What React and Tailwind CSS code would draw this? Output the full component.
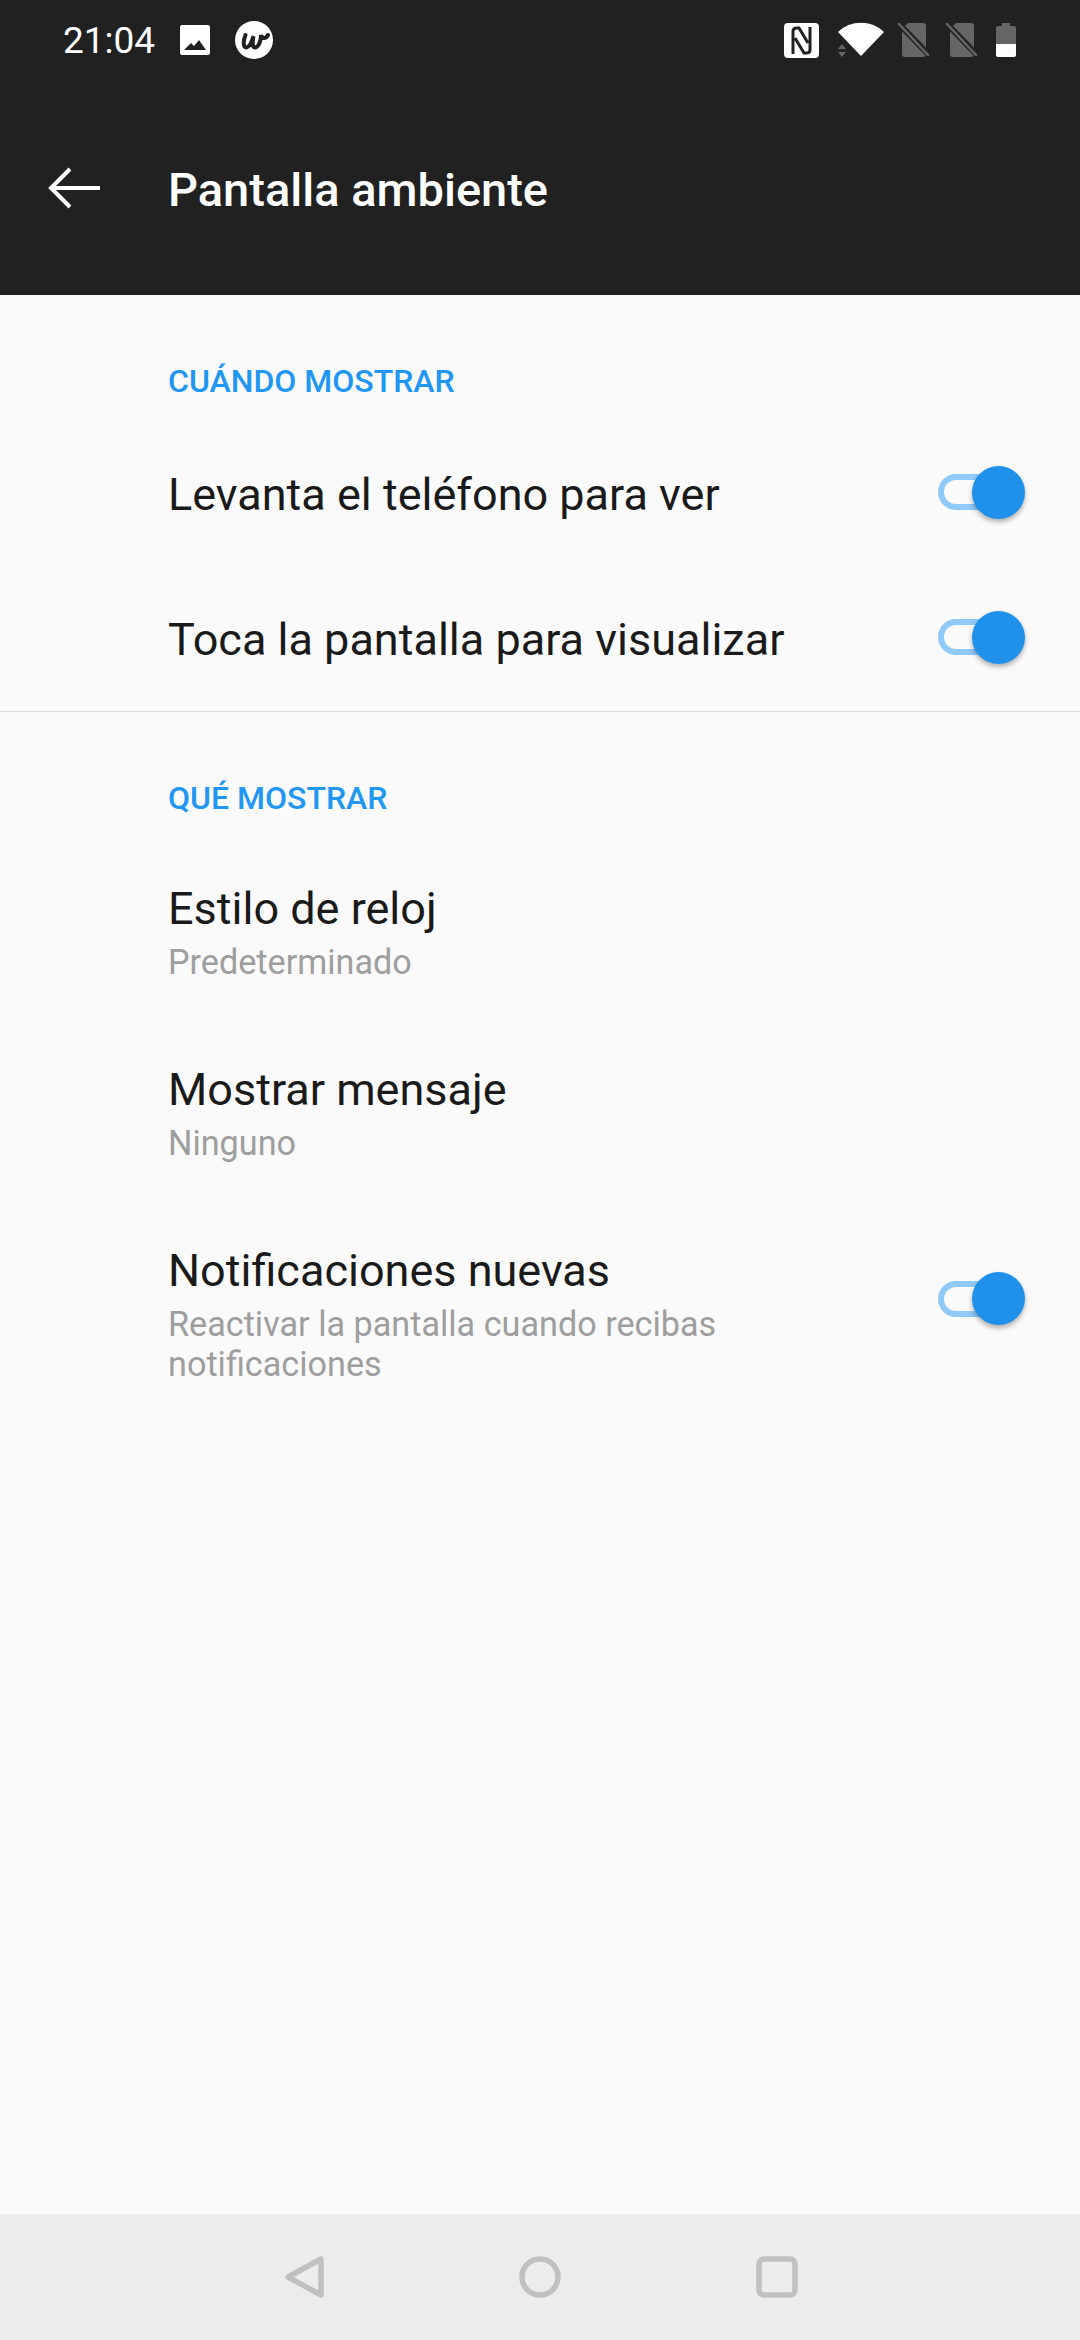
import React from "react";

const Toggle = ({ className }) => (
  <div className={`relative w-[87px] h-[53px] shrink-0 flex items-center ${className}`}>
    <div className="w-[64px] h-[36px] rounded-full border-[6px] border-[#90caf9]"></div>
    <div className="absolute right-0 top-0 w-[53px] h-[53px] rounded-full bg-[#2091eb] shadow-[0_3px_5px_rgba(0,0,0,0.3)]"></div>
  </div>
);

const SimOff = () => (
  <svg width="32" height="34" viewBox="0 0 32 34">
    <path d="M10 0h15a3 3 0 0 1 3 3v28a3 3 0 0 1-3 3H7a3 3 0 0 1-3-3V6z" fill="#666666" />
    <path d="M0 0l31 32" stroke="#212121" strokeWidth="6" />
    <path d="M1 1l29 31" stroke="#666666" strokeWidth="2.5" strokeLinecap="round" />
  </svg>
);

const StatusBar = () => (
  <div className="h-[80px] flex items-center justify-between pl-[63px] pr-[64px]">
    <div className="flex items-center">
      <span className="text-[37px] text-white leading-none">21:04</span>
      <svg className="ml-[25px]" width="30" height="30" viewBox="0 0 30 30">
        <path fillRule="evenodd" d="M2 0h26a2 2 0 0 1 2 2v26a2 2 0 0 1-2 2H2a2 2 0 0 1-2-2V2a2 2 0 0 1 2-2zM4 25h22l-7-10-5 6-3-3z" fill="#ffffff" />
      </svg>
      <svg className="ml-[25px]" width="38" height="38" viewBox="0 0 38 38">
        <circle cx="19" cy="19" r="19" fill="#ffffff" />
        <path d="M10.500 14C8 20 8 27 11.500 26.500C15 26 17 20 18.500 15C17.500 20 17 27 20 26.500C24 26 26 19 26 14C27 18 31 18 33 14" fill="none" stroke="#212121" strokeWidth="4" strokeLinecap="round" />
      </svg>
    </div>
    <div className="flex items-center">
      <svg width="35" height="35" viewBox="0 0 35 35">
        <rect width="35" height="35" rx="4" fill="#ffffff" />
        <path d="M9 31V8Q9 5 13 5H15L24 20M26 4V27Q26 30 22 30H20L11 15" fill="none" stroke="#212121" strokeWidth="3" />
      </svg>
      <svg className="ml-[18px]" width="48" height="36" viewBox="0 0 48 36">
        <path d="M1 10a33 33 0 0 1 46 0L24 34z" fill="#ffffff" />
        <path d="M5 22l-4 5h8zM5 35l-4-5h8z" fill="#666666" />
      </svg>
      <div className="ml-[13px]"><SimOff /></div>
      <div className="ml-[16px]"><SimOff /></div>
      <svg className="ml-[18px]" width="20" height="34" viewBox="0 0 20 34">
        <path d="M6 0h8v3h4a2 2 0 0 1 2 2v16H0V5a2 2 0 0 1 2-2h4z" fill="#666666" />
        <path d="M0 21h20v11a2 2 0 0 1-2 2H2a2 2 0 0 1-2-2z" fill="#ffffff" />
      </svg>
    </div>
  </div>
);

const SectionTitle = ({ children, className }) => (
  <div className={`pl-[168px] text-[32px] leading-[40px] font-medium text-[#2196f3] ${className}`}>{children}</div>
);

const Row = ({ title, sub, toggleClass, className }) => (
  <div className={`flex items-center justify-between pl-[168px] pr-[55px] ${className}`}>
    <div className="flex-1">
      <div className="text-[45px] leading-[56px] text-[#1a1a1a]">{title}</div>
      {sub && <div className="mt-[5px] w-[600px] text-[34.2px] leading-[40px] text-[#9e9e9e]">{sub}</div>}
    </div>
    {toggleClass && <Toggle className={toggleClass} />}
  </div>
);

export default function App() {
  return (
    <div className="w-[1080px] h-[2340px] flex flex-col bg-[#fafafa] font-['Roboto',sans-serif]">
      <div className="h-[295px] bg-[#212121]">
        <StatusBar />
        <div className="flex items-center h-[130px] pl-[48px] mt-[43px]">
          <svg width="52" height="42" viewBox="0 0 52 42" fill="none" stroke="#ffffff" strokeWidth="4">
            <path d="M52 21H3M22 2L3 21l19 19" />
          </svg>
          <div className="ml-[68px] mt-[5px] text-[47px] font-medium text-white">Pantalla ambiente</div>
        </div>
      </div>

      <div className="flex-1">
        <SectionTitle className="mt-[66px]">CUÁNDO MOSTRAR</SectionTitle>
        <Row className="mt-[66px] h-[56px]" title="Levanta el teléfono para ver" toggleClass="-mt-[6px]" />
        <Row className="mt-[89px] h-[56px]" title="Toca la pantalla para visualizar" toggleClass="-mt-[6px]" />
        <div className="h-[1px] bg-[#dcdcdc] mt-[43px]"></div>
        <SectionTitle className="mt-[66px]">QUÉ MOSTRAR</SectionTitle>
        <Row className="mt-[63px]" title="Estilo de reloj" sub="Predeterminado" />
        <Row className="mt-[80px]" title="Mostrar mensaje" sub="Ninguno" />
        <Row className="mt-[80px]" title="Notificaciones nuevas" sub="Reactivar la pantalla cuando recibas notificaciones" toggleClass="-mt-[30px]" />
      </div>

      <div className="h-[126px] bg-[#ececec] flex items-start pl-[285px] pt-[42px]">
        <svg width="39" height="42" viewBox="0 0 39 42" fill="none" stroke="#c0c0c0" strokeWidth="5.500" strokeLinejoin="round">
          <path d="M36 3v36L3 21z" />
        </svg>
        <svg className="ml-[195px]" width="42" height="42" viewBox="0 0 42 42" fill="none" stroke="#c0c0c0" strokeWidth="5.500">
          <circle cx="21" cy="21" r="18" />
        </svg>
        <svg className="ml-[195px]" width="42" height="42" viewBox="0 0 42 42" fill="none" stroke="#c0c0c0" strokeWidth="5.500">
          <rect x="3" y="3" width="36" height="36" rx="5" />
        </svg>
      </div>
    </div>
  );
}
